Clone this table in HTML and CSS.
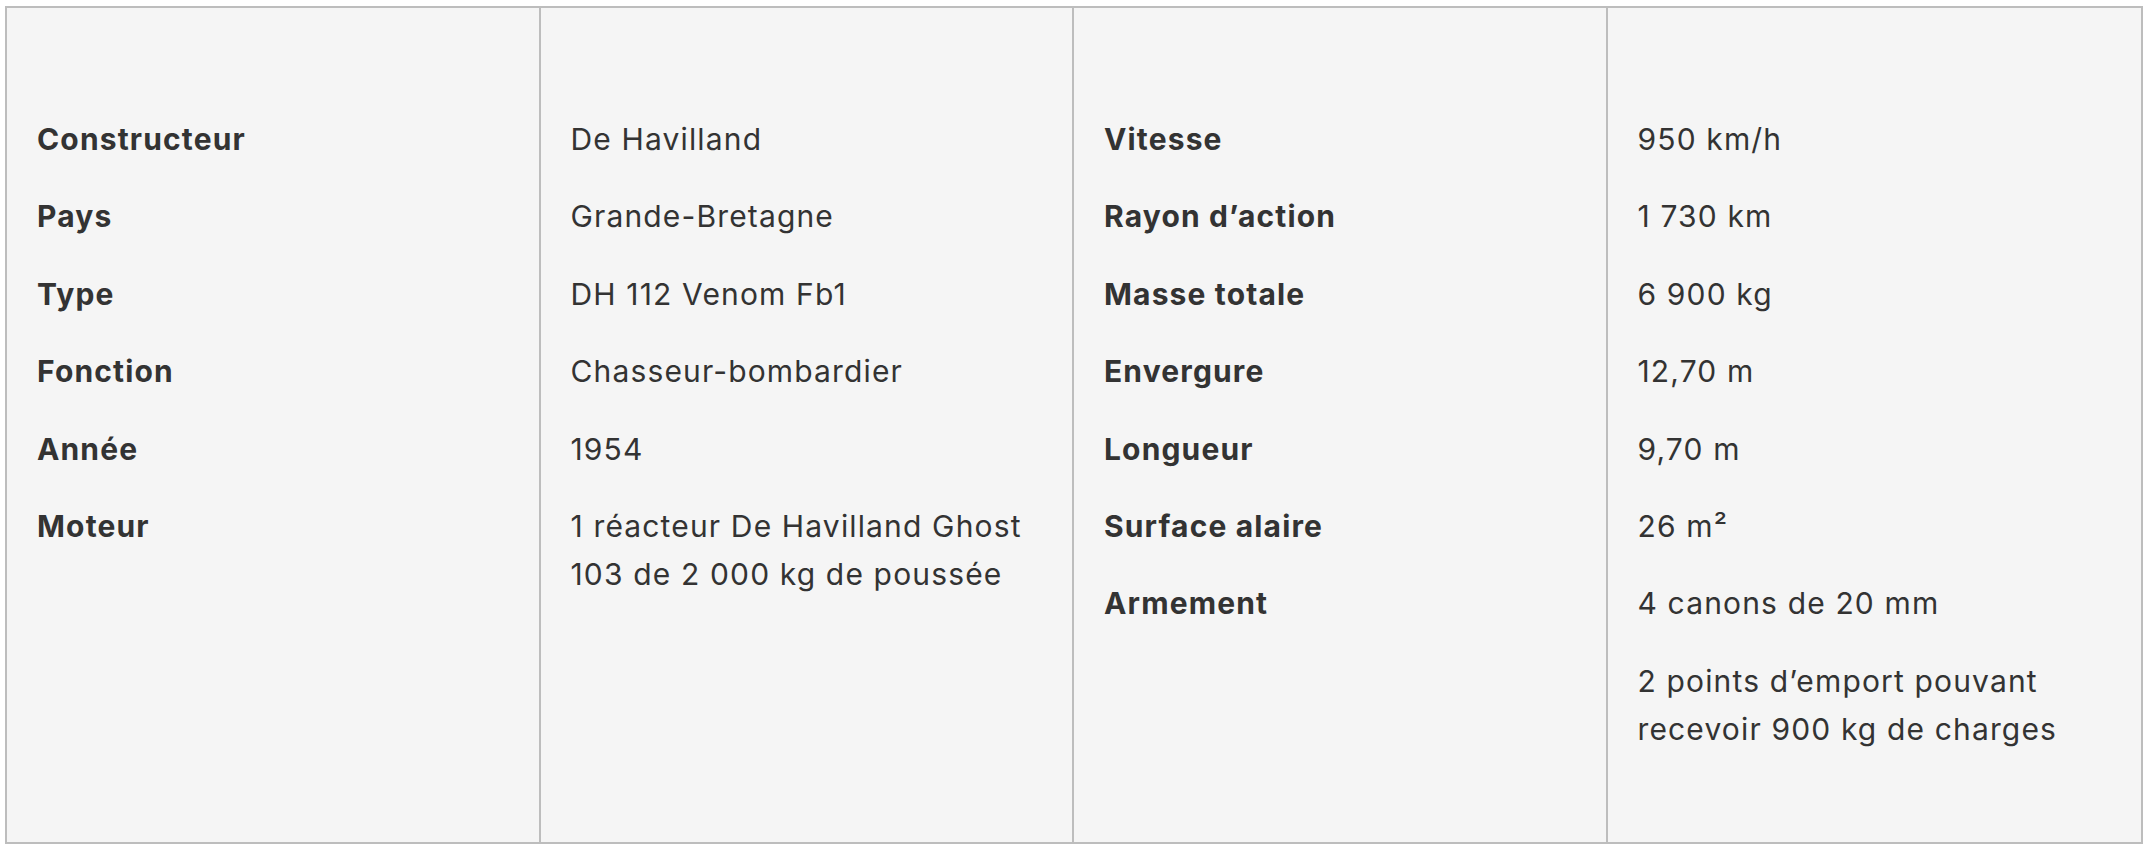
FILE: index.html
```html
<!DOCTYPE html>
<html lang="fr">
<head>
<meta charset="utf-8">
<title>De Havilland Venom</title>
<link rel="stylesheet" href="styles.css">
</head>
<body>
<div class="specs">
  <div class="col labels">
    <p>Constructeur</p>
    <p>Pays</p>
    <p>Type</p>
    <p>Fonction</p>
    <p>Année</p>
    <p>Moteur</p>
  </div>
  <div class="col values">
    <p>De Havilland</p>
    <p>Grande-Bretagne</p>
    <p>DH 112 Venom Fb1</p>
    <p>Chasseur-bombardier</p>
    <p>1954</p>
    <p>1 réacteur De Havilland Ghost 103 de 2 000 kg de poussée</p>
  </div>
  <div class="col labels">
    <p>Vitesse</p>
    <p>Rayon d’action</p>
    <p>Masse totale</p>
    <p>Envergure</p>
    <p>Longueur</p>
    <p>Surface alaire</p>
    <p>Armement</p>
  </div>
  <div class="col values">
    <p>950 km/h</p>
    <p>1 730 km</p>
    <p>6 900 kg</p>
    <p>12,70 m</p>
    <p>9,70 m</p>
    <p>26 m²</p>
    <p>4 canons de 20 mm</p>
    <p>2 points d’emport pouvant recevoir 900 kg de charges</p>
  </div>
</div>
</body>
</html>
```

FILE: styles.css
```css
html, body {
  margin: 0;
  padding: 0;
  background: #ffffff;
}

body {
  padding: 6px 9px 6px 5px;
  font-family: Inter, "Noto Sans", sans-serif;
  color: #333333;
}

.specs {
  display: grid;
  grid-template-columns: repeat(4, 1fr);
  height: 838px;
  box-sizing: border-box;
  border: 2px solid #bdbdbd;
  background: #f5f5f5;
}

.col {
  padding: 107px 28px 0 30px;
  border-right: 2px solid #bdbdbd;
}

.col:last-child {
  border-right: none;
}

.col p {
  margin: 0 0 29.4px 0;
  font-size: 30px;
  line-height: 48px;
  letter-spacing: 1.15px;
}

.labels p {
  font-weight: 700;
  color: #333333;
}

.values p {
  font-weight: 400;
  color: #333333;
}
```
